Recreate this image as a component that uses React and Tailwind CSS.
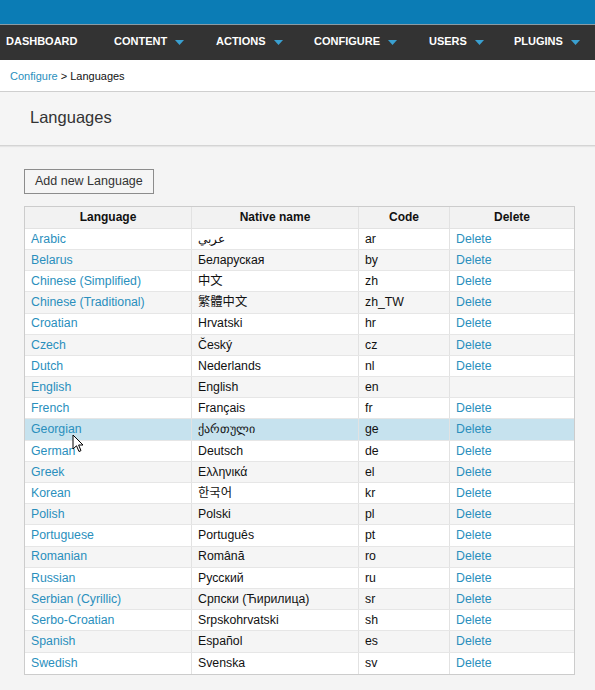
import React from "react";

const rows = [
  ["Arabic", "عربي", "ar", true],
  ["Belarus", "Беларуская", "by", true],
  ["Chinese (Simplified)", "中文", "zh", true],
  ["Chinese (Traditional)", "繁體中文", "zh_TW", true],
  ["Croatian", "Hrvatski", "hr", true],
  ["Czech", "Český", "cz", true],
  ["Dutch", "Nederlands", "nl", true],
  ["English", "English", "en", false],
  ["French", "Français", "fr", true],
  ["Georgian", "ქართული", "ge", true],
  ["German", "Deutsch", "de", true],
  ["Greek", "Ελληνικά", "el", true],
  ["Korean", "한국어", "kr", true],
  ["Polish", "Polski", "pl", true],
  ["Portuguese", "Português", "pt", true],
  ["Romanian", "Română", "ro", true],
  ["Russian", "Русский", "ru", true],
  ["Serbian (Cyrillic)", "Српски (Ћирилица)", "sr", true],
  ["Serbo-Croatian", "Srpskohrvatski", "sh", true],
  ["Spanish", "Español", "es", true],
  ["Swedish", "Svenska", "sv", true],
];

function Caret() {
  return (
    <svg width="9" height="5" viewBox="0 0 9 5" className="ml-[8px] mt-[1px]">
      <polygon points="0,0 9,0 4.5,5" fill="#3aa0d0" />
    </svg>
  );
}

export default function App() {
  return (
    <div
      className="relative w-[595px] h-[690px] overflow-hidden bg-[#f4f4f4] text-[#111]"
      style={{ fontFamily: '"Liberation Sans", Arial, "Noto Sans CJK SC", sans-serif' }}
    >
      <div className="h-[24px] bg-[#0b7cb5]" />
      <div className="h-[36px] bg-[#333333] border-t border-[#8a9ba5] flex items-center pb-[2px]">
        <div className="flex items-center text-white font-bold text-[11px]">
          <div className="pl-[6px] w-[114px]">DASHBOARD</div>
          <div className="w-[102px] flex items-center">CONTENT<Caret /></div>
          <div className="w-[98px] flex items-center">ACTIONS<Caret /></div>
          <div className="w-[115px] flex items-center">CONFIGURE<Caret /></div>
          <div className="w-[85px] flex items-center">USERS<Caret /></div>
          <div className="flex items-center">PLUGINS<Caret /></div>
        </div>
      </div>
      <div className="h-[32px] bg-white flex items-center pl-[10px] pt-[2px] text-[11px] border-b border-[#cfcfcf] shadow-[0_1px_1px_rgba(0,0,0,0.08)]">
        <span className="text-[#2a8fbd]">Configure</span>
        <span className="ml-[3px]">&gt; Languages</span>
      </div>
      <div className="h-[54px] bg-[#f5f5f5] flex items-center pl-[30px] pb-[2px] text-[16.5px] text-[#333] border-b border-[#d4d4d4] shadow-[0_1px_1px_rgba(0,0,0,0.06)]">
        Languages
      </div>
      <div className="pl-[24px] pt-[22px]">
        <button className="h-[25px] px-[10px] border border-[#8c8c8c] bg-[#f5f5f5] text-[12.5px] text-[#333] leading-none">
          Add new Language
        </button>
        <div className="mt-[12px] w-[551px] border border-[#cccccc] text-[12.3px]">
          <div className="flex h-[22px] bg-[#f2f2f2] font-bold border-b border-[#e2e2e2] text-[12px]">
            <div className="w-[167px] border-r border-[#e2e2e2] flex items-center justify-center">Language</div>
            <div className="w-[167px] border-r border-[#e2e2e2] flex items-center justify-center">Native name</div>
            <div className="w-[91px] border-r border-[#e2e2e2] flex items-center justify-center">Code</div>
            <div className="flex-1 flex items-center justify-center">Delete</div>
          </div>
          {rows.map(([name, native, code, del], i) => {
            const bg =
              name === "Georgian" ? "bg-[#c6e2ee]" : i % 2 === 0 ? "bg-white" : "bg-[#f5f5f5]";
            return (
              <div
                key={code}
                className={`flex h-[21.2px] box-border ${bg} ${i < rows.length - 1 ? "border-b border-[#e6e6e6]" : ""}`}
              >
                <div className="w-[167px] border-r border-[#e2e2e2] flex items-center pl-[6px] text-[#2a8fbd]">{name}</div>
                <div className="w-[167px] border-r border-[#e2e2e2] flex items-center pl-[6px]">{native}</div>
                <div className="w-[91px] border-r border-[#e2e2e2] flex items-center pl-[6px]">{code}</div>
                <div className="flex-1 flex items-center pl-[6px] text-[#2a8fbd]">{del ? "Delete" : ""}</div>
              </div>
            );
          })}
        </div>
      </div>
      <svg
        className="absolute left-[72px] top-[434px]"
        width="13"
        height="19"
        viewBox="0 0 13 19"
      >
        <path
          d="M1 1 L1 15 L4.5 11.8 L7 17.5 L9 16.6 L6.6 11 L11 11 Z"
          fill="white"
          stroke="black"
          strokeWidth="1"
          strokeLinejoin="round"
        />
      </svg>
    </div>
  );
}
